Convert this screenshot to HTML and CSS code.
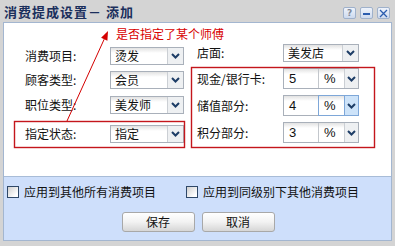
FILE: index.html
```html
<!DOCTYPE html>
<html lang="zh">
<head>
<meta charset="utf-8">
<title>消费提成设置</title>
<link rel="stylesheet" href="styles.css">
</head>
<body>
<div class="dialog">
  <div class="titlebar">
    <div class="title">消费提成设置－ 添加</div>
    <div class="tools">
      <span class="tool tool-help">?</span>
      <span class="tool tool-min"><span class="bar"></span></span>
      <span class="tool tool-close"><svg width="9" height="9" viewBox="0 0 9 9"><path d="M1 1L8 8M8 1L1 8" stroke="#2a5cae" stroke-width="1.3" fill="none"/></svg></span>
    </div>
  </div>
  <div class="panel">
    <div class="form">
      <div class="col col-left">
        <div class="row"><span class="label">消费项目:</span><div class="select"><span class="val">烫发</span><span class="arrow"><svg width="9" height="6" viewBox="0 0 9 6"><path d="M1 1L4.5 4.5L8 1" stroke="#1d3d66" stroke-width="2" fill="none"/></svg></span></div></div>
        <div class="row"><span class="label">顾客类型:</span><div class="select"><span class="val">会员</span><span class="arrow"><svg width="9" height="6" viewBox="0 0 9 6"><path d="M1 1L4.5 4.5L8 1" stroke="#1d3d66" stroke-width="2" fill="none"/></svg></span></div></div>
        <div class="row row-3"><span class="label">职位类型:</span><div class="select"><span class="val">美发师</span><span class="arrow"><svg width="9" height="6" viewBox="0 0 9 6"><path d="M1 1L4.5 4.5L8 1" stroke="#1d3d66" stroke-width="2" fill="none"/></svg></span></div></div>
        <div class="row row-4"><span class="label">指定状态:</span><div class="select"><span class="val">指定</span><span class="arrow"><svg width="9" height="6" viewBox="0 0 9 6"><path d="M1 1L4.5 4.5L8 1" stroke="#1d3d66" stroke-width="2" fill="none"/></svg></span></div></div>
      </div>
      <div class="col col-right">
        <div class="row"><span class="label label-r">店面:</span><div class="select select-r"><span class="val">美发店</span><span class="arrow"><svg width="9" height="6" viewBox="0 0 9 6"><path d="M1 1L4.5 4.5L8 1" stroke="#1d3d66" stroke-width="2" fill="none"/></svg></span></div></div>
        <div class="row row-tall"><span class="label label-r">现金/银行卡:</span><div class="combo"><span class="num">5</span><div class="drop"><span class="unit">%</span><span class="arrow"><svg width="9" height="6" viewBox="0 0 9 6"><path d="M1 1L4.5 4.5L8 1" stroke="#1d3d66" stroke-width="2" fill="none"/></svg></span></div></div></div>
        <div class="row row-tall"><span class="label label-r">储值部分:</span><div class="combo"><span class="num">4</span><div class="drop hover"><span class="unit">%</span><span class="arrow"><svg width="9" height="6" viewBox="0 0 9 6"><path d="M1 1L4.5 4.5L8 1" stroke="#1d3d66" stroke-width="2" fill="none"/></svg></span></div></div></div>
        <div class="row row-tall"><span class="label label-r">积分部分:</span><div class="combo"><span class="num">3</span><div class="drop"><span class="unit">%</span><span class="arrow"><svg width="9" height="6" viewBox="0 0 9 6"><path d="M1 1L4.5 4.5L8 1" stroke="#1d3d66" stroke-width="2" fill="none"/></svg></span></div></div></div>
      </div>
    </div>
    <div class="footer">
      <div class="checks">
        <label class="check check-first"><span class="box"></span><span>应用到其他所有消费项目</span></label>
        <label class="check"><span class="box"></span><span>应用到同级别下其他消费项目</span></label>
      </div>
      <div class="buttons">
        <span class="btn">保存</span>
        <span class="btn">取消</span>
      </div>
    </div>
  </div>
  <svg class="annot" width="395" height="246" viewBox="0 0 395 246">
    <rect x="14.5" y="121.5" width="170" height="26" fill="none" stroke="#c4161c" stroke-width="1.4"/>
    <rect x="191.5" y="67.5" width="183" height="80" fill="none" stroke="#c4161c" stroke-width="1.4"/>
    <line x1="67" y1="121" x2="104.2" y2="39.2" stroke="#d40000" stroke-width="1"/>
    <polygon points="108,31 107.4,40.7 101.1,37.7" fill="#d40000"/>
  </svg>
  <div class="note">是否指定了某个师傅</div>
</div>
</body>
</html>
```

FILE: styles.css
```css
* { box-sizing: border-box; }
html, body { margin: 0; padding: 0; }
body {
  font-family: "Noto Sans CJK SC", "Noto Sans", sans-serif;
  font-size: 12px;
  color: #111;
  background: #fff;
}
.dialog {
  position: relative;
  width: 395px;
  height: 246px;
  background: #d4d4d4;
  padding: 0 3px 5px 3px;
  display: flex;
  flex-direction: column;
}
.titlebar {
  height: 22px;
  display: flex;
  align-items: flex-start;
  justify-content: space-between;
}
.title {
  padding-left: 1px;
  margin-top: 4px;
  font-size: 13px;
  line-height: 16px;
  font-weight: bold;
  letter-spacing: 1px;
  color: #1b2f5c;
}
.tools {
  display: flex;
  gap: 4px;
  margin-top: 7px;
  margin-right: 2px;
}
.tool {
  width: 13px;
  height: 12px;
  border: 1px solid #9fb1cb;
  border-radius: 2px;
  background: linear-gradient(#eef3fb, #cddaee);
  display: flex;
  align-items: center;
  justify-content: center;
}
.tool-help {
  font-family: "DejaVu Sans", sans-serif;
  font-weight: bold;
  font-size: 9px;
  line-height: 10px;
  color: #7f8a99;
}
.tool-min .bar {
  width: 7px;
  height: 2px;
  background: #2a5cae;
  margin-top: 1px;
}
.panel {
  flex: 1;
  border: 1px solid #a3b6d0;
  display: flex;
  flex-direction: column;
}
.form {
  height: 153px;
  background: #fff;
  display: flex;
}
.col {
  display: flex;
  flex-direction: column;
}
.col-left {
  padding-top: 24px;
  margin-left: 21px;
  gap: 6px;
}
.col-right {
  padding-top: 21px;
  margin-left: 13px;
  gap: 6px;
}
.row {
  display: flex;
  align-items: center;
  height: 18px;
}
.row-3 { margin-top: 1px; }
.row-4 { margin-top: 5px; }
.row-tall { height: 21px; }
.label {
  width: 85px;
  line-height: 16px;
  white-space: nowrap;
}
.label-r { width: 86px; }
.select {
  width: 74px;
  height: 18px;
  border: 1px solid #a9b0ba;
  display: flex;
  background: linear-gradient(#e2e2e2, #fff 5px);
}
.select-r { width: 76px; }
.val {
  flex: 1;
  padding-left: 4px;
  line-height: 16px;
  white-space: nowrap;
}
.arrow {
  width: 16px;
  border-left: 1px solid #cbcfd4;
  background: #eef0f2;
  display: flex;
  align-items: center;
  justify-content: center;
}
.combo {
  width: 76px;
  height: 21px;
  border: 1px solid #a9b0ba;
  display: flex;
  background: linear-gradient(#e2e2e2, #fff 5px);
}
.num {
  width: 36px;
  border-right: 1px solid #c3c7cc;
  padding-left: 5px;
  line-height: 19px;
  font-family: "Liberation Sans", sans-serif;
  font-size: 13px;
}
.drop {
  flex: 1;
  display: flex;
}
.unit {
  width: 25px;
  padding-left: 5px;
  line-height: 19px;
  font-family: "Liberation Sans", sans-serif;
  font-size: 13px;
}
.drop .arrow { width: 14px; }
.drop.hover {
  margin: -1px -1px -1px -1px;
  border: 1px solid #7ea7d8;
}
.drop.hover .arrow {
  background: #cde3f9;
  border-left-color: #7ea7d8;
}
.footer {
  flex: 1;
  background: #cedffb;
  border-top: 1px solid #a8bcd7;
  padding: 8px 0 0 3px;
  display: flex;
  flex-direction: column;
}
.checks {
  display: flex;
  align-items: center;
  height: 14px;
}
.check {
  display: flex;
  align-items: center;
  gap: 5px;
  line-height: 14px;
  white-space: nowrap;
}
.check-first { width: 179px; }
.box {
  width: 12px;
  height: 12px;
  border: 1px solid #2f4868;
  background: linear-gradient(135deg, #cfcfcf, #fff 80%);
}
.buttons {
  display: flex;
  justify-content: center;
  gap: 7px;
  margin-top: 13px;
  margin-left: -2px;
}
.btn {
  width: 73px;
  height: 20px;
  border: 1px solid #a8a8a8;
  border-radius: 3px;
  background: linear-gradient(#ffffff, #f2f2f2 50%, #d6d6d6);
  text-align: center;
  line-height: 18px;
  font-size: 12px;
}
.annot {
  position: absolute;
  left: 0;
  top: 0;
  pointer-events: none;
}
.note {
  position: absolute;
  left: 116px;
  top: 27px;
  font-size: 12px;
  line-height: 14px;
  color: #d80000;
  white-space: nowrap;
}
```
